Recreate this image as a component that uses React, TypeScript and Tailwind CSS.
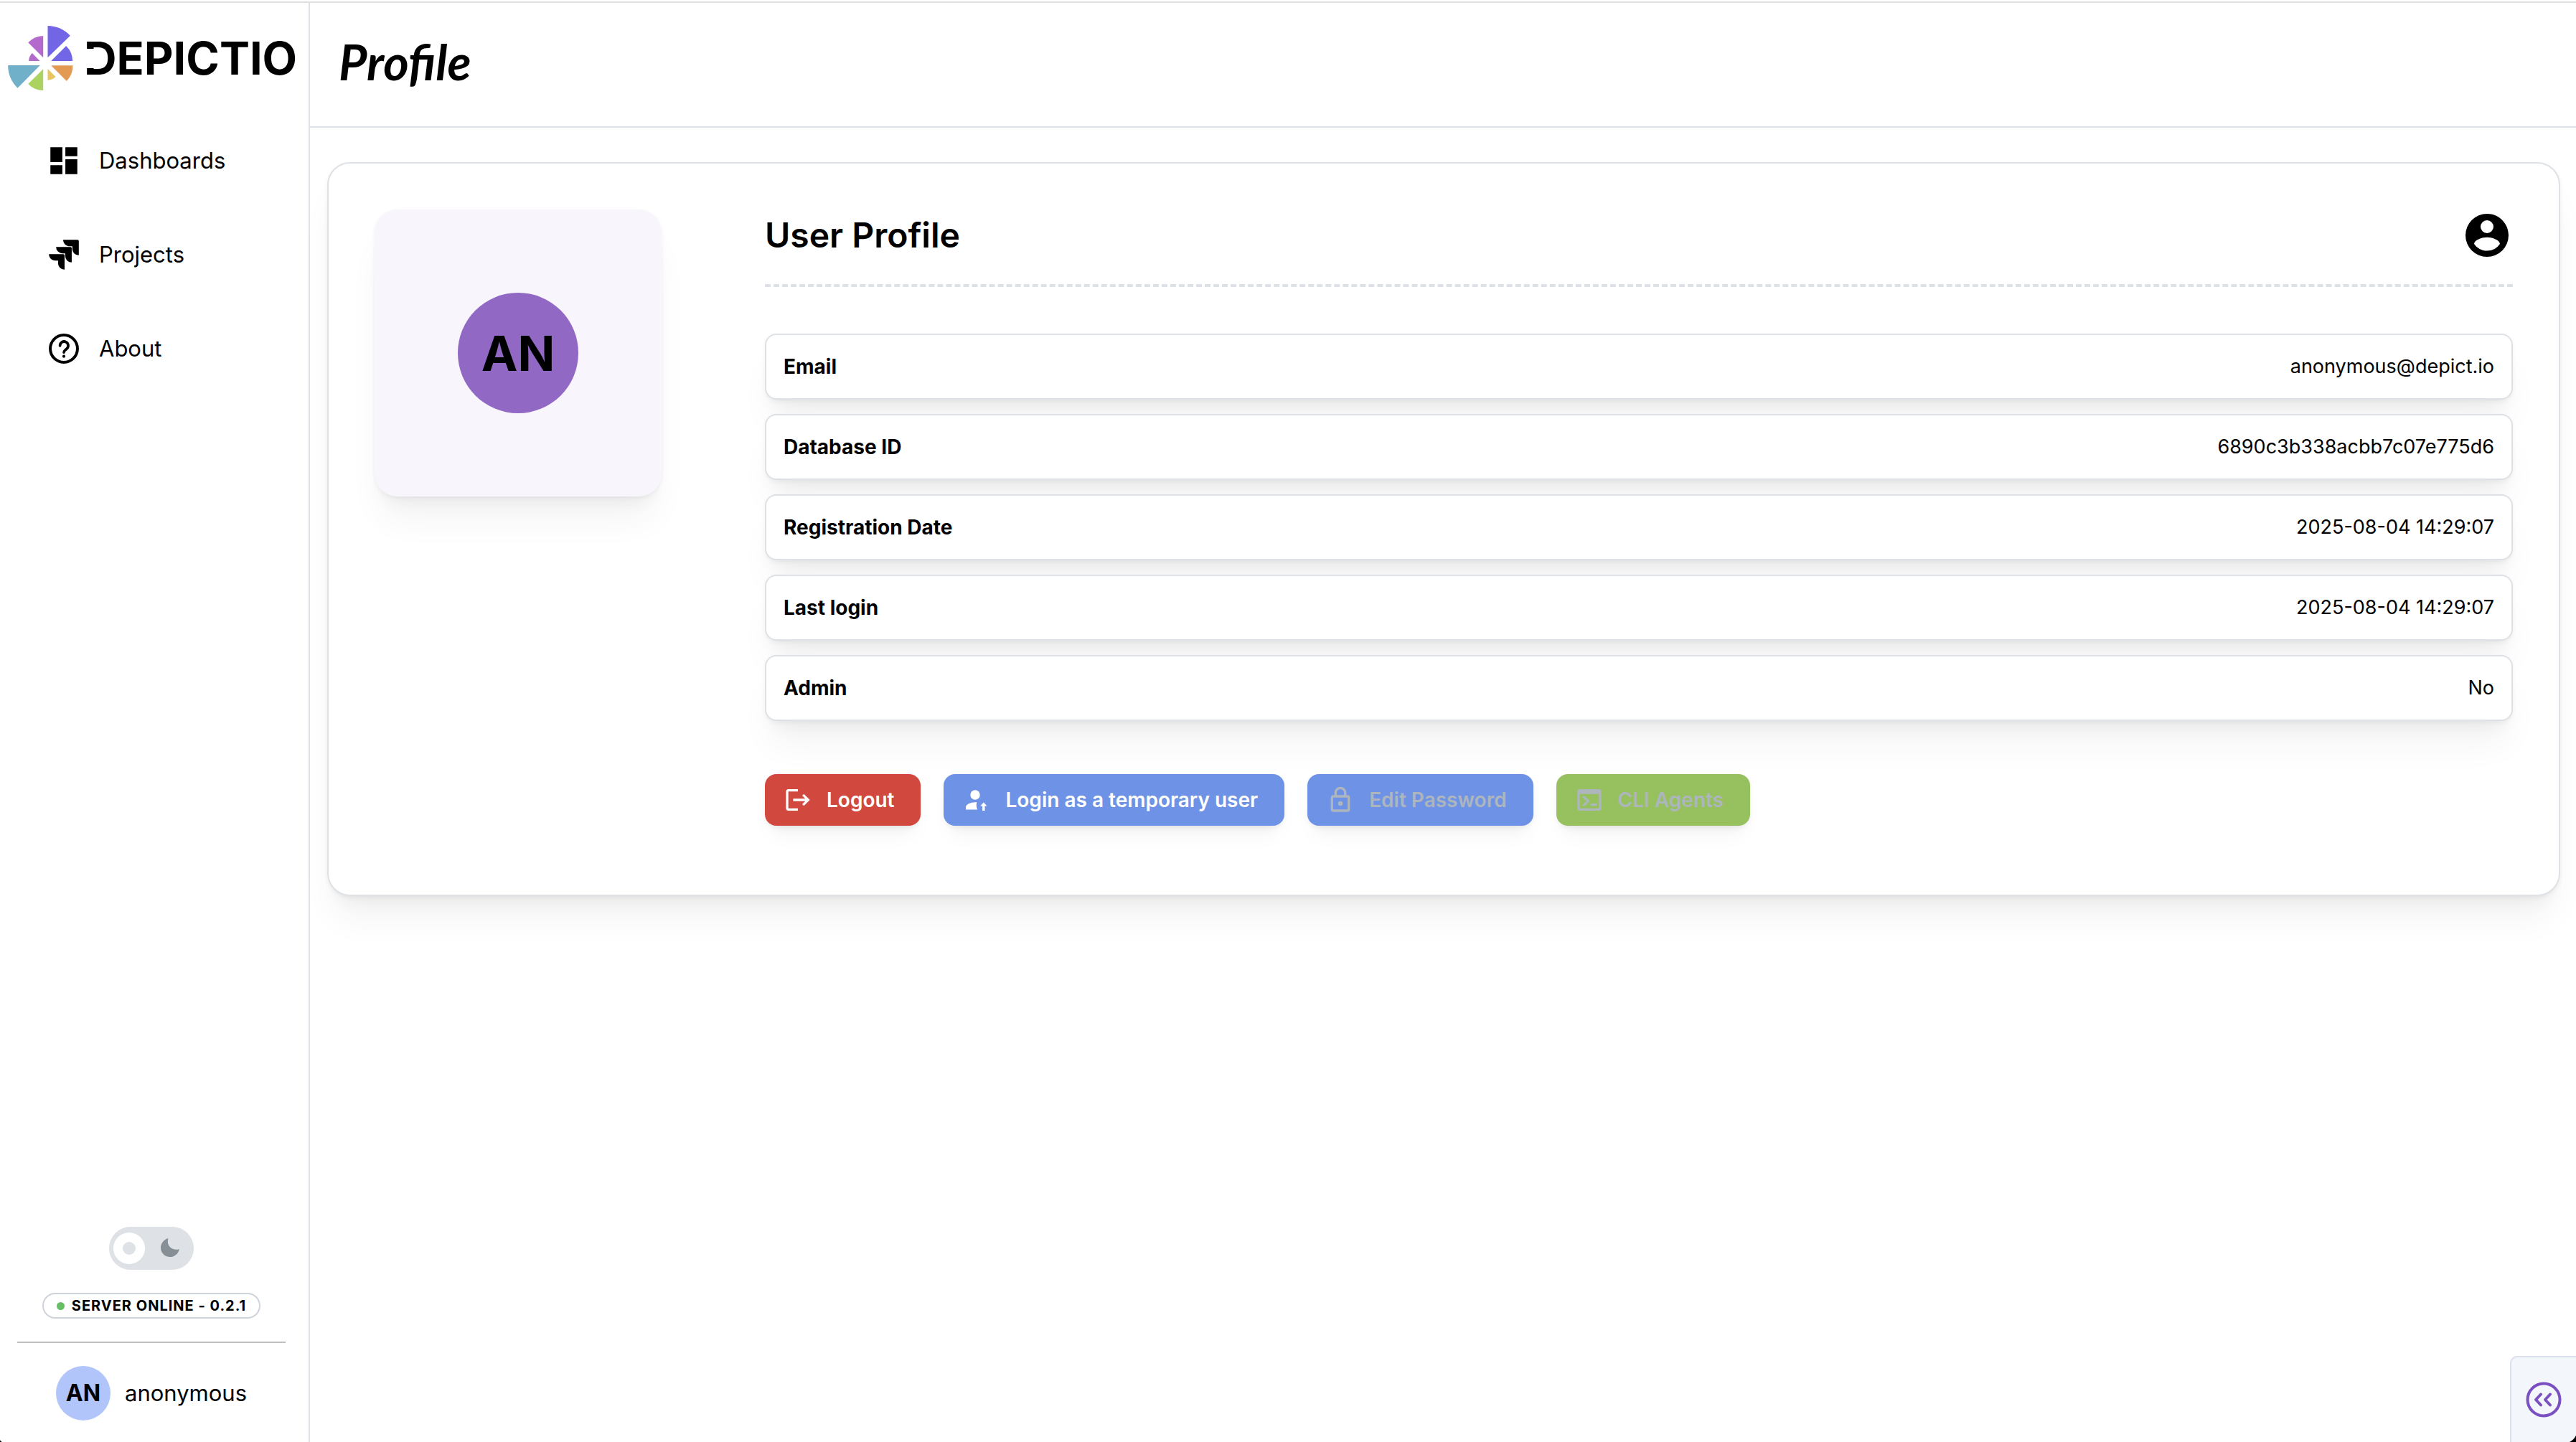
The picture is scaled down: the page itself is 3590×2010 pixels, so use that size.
import React from "react";

const INK_SHADOW =
  "shadow-[0_2px_6px_rgba(0,0,0,0.05),0_40px_50px_-10px_rgba(0,0,0,0.05),0_20px_20px_-10px_rgba(0,0,0,0.04)]";

const MDI = {
  dashboard: "M13 3v6h8V3m-8 18h8V11h-8M3 21h8v-6H3m0-2h8V3H3v10Z",
  jira: "M11.53 2c0 2.4 1.97 4.35 4.35 4.35h1.78v1.7c0 2.4 1.94 4.34 4.34 4.35V2.84a.84.84 0 0 0-.84-.84h-9.63M6.77 6.8a4.362 4.362 0 0 0 4.34 4.34h1.8v1.72a4.362 4.362 0 0 0 4.34 4.34V7.63a.841.841 0 0 0-.83-.83H6.77M2 11.6c0 2.4 1.95 4.34 4.35 4.34h1.78v1.72c.01 2.39 1.95 4.34 4.34 4.34v-9.57a.85.85 0 0 0-.85-.85L2 11.6Z",
  account:
    "M12 19.2c-2.5 0-4.71-1.28-6-3.2c.03-2 4-3.1 6-3.1s5.97 1.1 6 3.1a7.232 7.232 0 0 1-6 3.2M12 5a3 3 0 0 1 3 3a3 3 0 0 1-3 3a3 3 0 0 1-3-3a3 3 0 0 1 3-3m0-3A10 10 0 0 0 2 12a10 10 0 0 0 10 10a10 10 0 0 0 10-10c0-5.53-4.5-10-10-10Z",
  logout:
    "m17 7-1.41 1.41L18.17 11H8v2h10.17l-2.58 2.58L17 17l5-5M4 5h8V3H4c-1.1 0-2 .9-2 2v14c0 1.1.9 2 2 2h8v-2H4V5Z",
  lock: "M12 17a2 2 0 0 1-2-2c0-1.11.89-2 2-2a2 2 0 0 1 2 2a2 2 0 0 1-2 2m6 3V10H6v10h12m0-12a2 2 0 0 1 2 2v10a2 2 0 0 1-2 2H6a2 2 0 0 1-2-2V10c0-1.11.89-2 2-2h1V6a5 5 0 0 1 5-5a5 5 0 0 1 5 5v2h1m-6-5a3 3 0 0 0-3 3v2h6V6a3 3 0 0 0-3-3Z",
  console:
    "M20 19V7H4v12h16m0-16a2 2 0 0 1 2 2v14a2 2 0 0 1-2 2H4a2 2 0 0 1-2-2V5a2 2 0 0 1 2-2h16m-7 14v-2h5v2h-5m-3.42-4L5.57 9H8.4l3.3 3.3c.39.39.39 1.03 0 1.42L8.42 17H5.59l3.99-4Z",
};

function Icon({ d, className }: { d: string; className: string }) {
  return (
    <svg viewBox="0 0 24 24" fill="currentColor" aria-hidden="true" className={className}>
      <path d={d} />
    </svg>
  );
}

function HelpIcon() {
  return (
    <svg viewBox="0 0 24 24" fill="none" stroke="currentColor" aria-hidden="true" className="size-[50px]">
      <circle cx="12" cy="12" r="9.1" strokeWidth="1.9" />
      <path
        d="M9.4 10a2.75 2.75 0 1 1 4.5 2.1c-.9.75-1.9 1.2-1.9 2.3"
        strokeWidth="1.8"
        strokeLinecap="round"
      />
      <circle cx="12" cy="17.1" r="1" fill="currentColor" stroke="none" />
    </svg>
  );
}

function TemporaryUserIcon() {
  return (
    <svg viewBox="0 0 40 40" fill="currentColor" aria-hidden="true" className="size-10">
      <circle cx="18" cy="13" r="6.7" />
      <path d="M5 33.5v-3.6c0-3.4 6.5-6.6 13-6.6h2.4c-1.2 3.2-.8 7 .8 10.2z" />
      <path d="m29.8 23.6 4.7 5h-3V35h-3.4v-6.4h-3z" />
    </svg>
  );
}

function LogoMark() {
  return (
    <svg viewBox="33 108 272 270" aria-hidden="true" className="h-[90px] w-[91px]">
      <path fill="#7366e6" d="M199 241V108A133 133 0 0 1 293 149Z" />
      <path fill="#7366e6" d="M213 255L276 192A90 90 0 0 1 303 255Z" />
      <path fill="#e39a55" d="M213 274H304A90 90 0 0 1 278 339Z" />
      <path fill="#e9c55f" d="M199 288L232 321A47 47 0 0 1 199 335Z" />
      <path fill="#acd362" d="M180 289V378A89 89 0 0 1 117 351Z" />
      <path fill="#70b0c9" d="M167 273L73 368A133 133 0 0 1 33 273Z" />
      <path fill="#b469cd" d="M166 255L134 222A47 47 0 0 0 120 255Z" />
      <path fill="#b469cd" d="M180 241V150A90 90 0 0 0 117 178Z" />
    </svg>
  );
}

const NAV = [
  { label: "Dashboards", icon: <Icon d={MDI.dashboard} className="size-[50px]" /> },
  { label: "Projects", icon: <Icon d={MDI.jira} className="size-[50px]" /> },
  { label: "About", icon: <HelpIcon /> },
];

const FIELDS = [
  ["Email", "anonymous@depict.io"],
  ["Database ID", "6890c3b338acbb7c07e775d6"],
  ["Registration Date", "2025-08-04 14:29:07"],
  ["Last login", "2025-08-04 14:29:07"],
  ["Admin", "No"],
];

const ACTIONS = [
  {
    label: "Logout",
    icon: <Icon d={MDI.logout} className="size-10" />,
    disabled: false,
    tone: "bg-[#d1483e] text-white",
  },
  {
    label: "Login as a temporary user",
    icon: <TemporaryUserIcon />,
    disabled: false,
    tone: "bg-[#6e93e6] text-white",
  },
  {
    label: "Edit Password",
    icon: <Icon d={MDI.lock} className="size-10" />,
    disabled: true,
    tone: "bg-[#6e93e6] text-[#adb5bd]",
  },
  {
    label: "CLI Agents",
    icon: <Icon d={MDI.console} className="size-10" />,
    disabled: true,
    tone: "bg-[#97c15e] text-[#adb5bd]",
  },
];

function Sidebar() {
  return (
    <aside className="flex w-[432px] shrink-0 flex-col border-r-2 border-[#dee2e6]">
      <a href="#home" className="flex items-center gap-[15px] pt-8 pl-[11px]">
        <LogoMark />
        <span className="relative text-[63px] leading-[90px] font-bold before:absolute before:top-[32px] before:left-0 before:h-[27px] before:w-[18px] before:bg-white">
          DEPICTIO
        </span>
      </a>

      <nav className="mt-[33px] flex flex-col gap-px">
        {NAV.map((item) => (
          <a
            key={item.label}
            href={`#${item.label.toLowerCase()}`}
            className="flex items-center gap-6 py-10 pl-16 text-[31px] leading-[50px]"
          >
            {item.icon}
            {item.label}
          </a>
        ))}
      </nav>

      <div className="mt-auto flex flex-col items-center gap-8 pr-8 pb-[30px] pl-6">
        <label className="relative flex">
          <input
            type="checkbox"
            role="switch"
            aria-label="Dark theme"
            className="h-[60px] w-[118px] appearance-none rounded-full bg-[#dee2e6]"
          />
          <span className="pointer-events-none absolute top-2 left-1.5 flex size-11 items-center justify-center rounded-full bg-white">
            <span className="size-[18px] rounded-full bg-[#dee2e6]" />
          </span>
          <svg
            viewBox="0 0 26 26"
            aria-hidden="true"
            className="pointer-events-none absolute top-4 right-5 size-[26px]"
          >
            <path
              fill="#868e96"
              d="M10.4.3C9 5.5 10.3 10.5 14 13.3C17 15.6 21 16.4 25.3 15.2C25.7 15.2 25.8 15.5 25.7 15.9C24 22 18.8 26 12.8 26A12.8 12.8 0 0 1 0 13.2C0 7.2 4.2 2 9.7.2C10.2 0 10.5.1 10.4.3Z"
            />
          </svg>
        </label>

        <div className="flex items-center gap-2.5 rounded-full border-2 border-[#ced4da] px-[18px] text-[20px] leading-8 font-bold tracking-wider">
          <span className="size-[11px] rounded-full bg-[#67bf65]" />
          SERVER ONLINE - 0.2.1
        </div>

        <hr className="w-full border-t-2 border-[#bfbfbf]" />

        <a href="#profile" className="flex items-center gap-5 text-[31px]">
          <span className="flex size-[76px] items-center justify-center rounded-full bg-[#b2c5fb] text-[32px] font-bold">
            AN
          </span>
          anonymous
        </a>
      </div>
    </aside>
  );
}

function ProfileCard() {
  return (
    <section
      className={`flex items-start gap-36 rounded-[32px] border-2 border-[#dee2e6] bg-white px-16 pt-16 pb-24 ${INK_SHADOW}`}
    >
      <div
        className={`flex size-[400px] shrink-0 items-center justify-center rounded-[32px] bg-[#f8f6fc] ${INK_SHADOW}`}
      >
        <span className="flex size-[168px] items-center justify-center rounded-full bg-[#9268c5] text-[68px] font-bold">
          AN
        </span>
      </div>

      <div className="min-w-0 flex-1">
        <div className="flex items-center justify-between">
          <h2 className="text-[48px] leading-[72px] font-semibold">User Profile</h2>
          <Icon d={MDI.account} className="size-[72px]" />
        </div>
        <hr className="mt-8 border-t-4 border-dashed border-[#dee2e6]" />

        <dl className="mt-[65px] flex flex-col gap-5">
          {FIELDS.map(([label, value]) => (
            <div
              key={label}
              className={`flex items-center justify-between rounded-2xl border-2 border-[#dee2e6] bg-white p-6 leading-10 ${INK_SHADOW}`}
            >
              <dt className="text-[28px] font-bold">{label}</dt>
              <dd className="text-[27px]">{value}</dd>
            </div>
          ))}
        </dl>

        <div className="mt-[74px] flex flex-wrap gap-8">
          {ACTIONS.map((action) => (
            <button
              key={action.label}
              type="button"
              disabled={action.disabled}
              className={`flex h-[72px] items-center gap-5 rounded-2xl pr-[37px] pl-[26px] text-[28px] font-semibold shadow-[0_2px_6px_rgba(0,0,0,0.05),0_20px_30px_-10px_rgba(0,0,0,0.05),0_14px_14px_-10px_rgba(0,0,0,0.04)] ${action.tone}`}
            >
              {action.icon}
              {action.label}
            </button>
          ))}
        </div>
      </div>
    </section>
  );
}

export default function App() {
  return (
    <div className="relative flex min-h-screen flex-col bg-white font-['Inter',sans-serif] text-black">
      <div className="h-1 border-b-2 border-[#e0e0e0]" />
      <div className="flex flex-1">
        <Sidebar />
        <div className="flex min-w-0 flex-1 flex-col">
          <header className="flex h-[174px] items-center border-b-2 border-[#dee2e6] pb-2 pl-10">
            <h1 className="font-['Lato',sans-serif] text-[68px] font-bold italic">Profile</h1>
          </header>
          <main className="pt-12 pr-[22px] pl-6">
            <ProfileCard />
          </main>
        </div>
      </div>

      <button
        type="button"
        aria-label="Expand panel"
        className="absolute right-0 bottom-0 flex h-[120px] w-[92px] items-center justify-center rounded-tl-[10px] border-t-2 border-l-2 border-[#dcdfec] bg-[#f3f6fa]"
      >
        <svg
          viewBox="0 0 50 50"
          fill="none"
          stroke="#7a4fc2"
          strokeWidth="4"
          strokeLinecap="round"
          strokeLinejoin="round"
          aria-hidden="true"
          className="size-[50px]"
        >
          <circle cx="25" cy="25" r="22.5" />
          <path d="M21 17.5L14 25L21 32.5M34 17.5L27 25L34 32.5" />
        </svg>
      </button>

      <svg viewBox="0 0 9 9" aria-hidden="true" className="absolute right-0 bottom-0 size-[9px]">
        <path d="M9 0C7 4 4 7 0 9H9Z" />
      </svg>
      <svg viewBox="0 0 3 3" aria-hidden="true" className="absolute bottom-0 left-0 size-[3px]">
        <path d="M0 0C.5 1.5 1.5 2.5 3 3H0Z" />
      </svg>
    </div>
  );
}
